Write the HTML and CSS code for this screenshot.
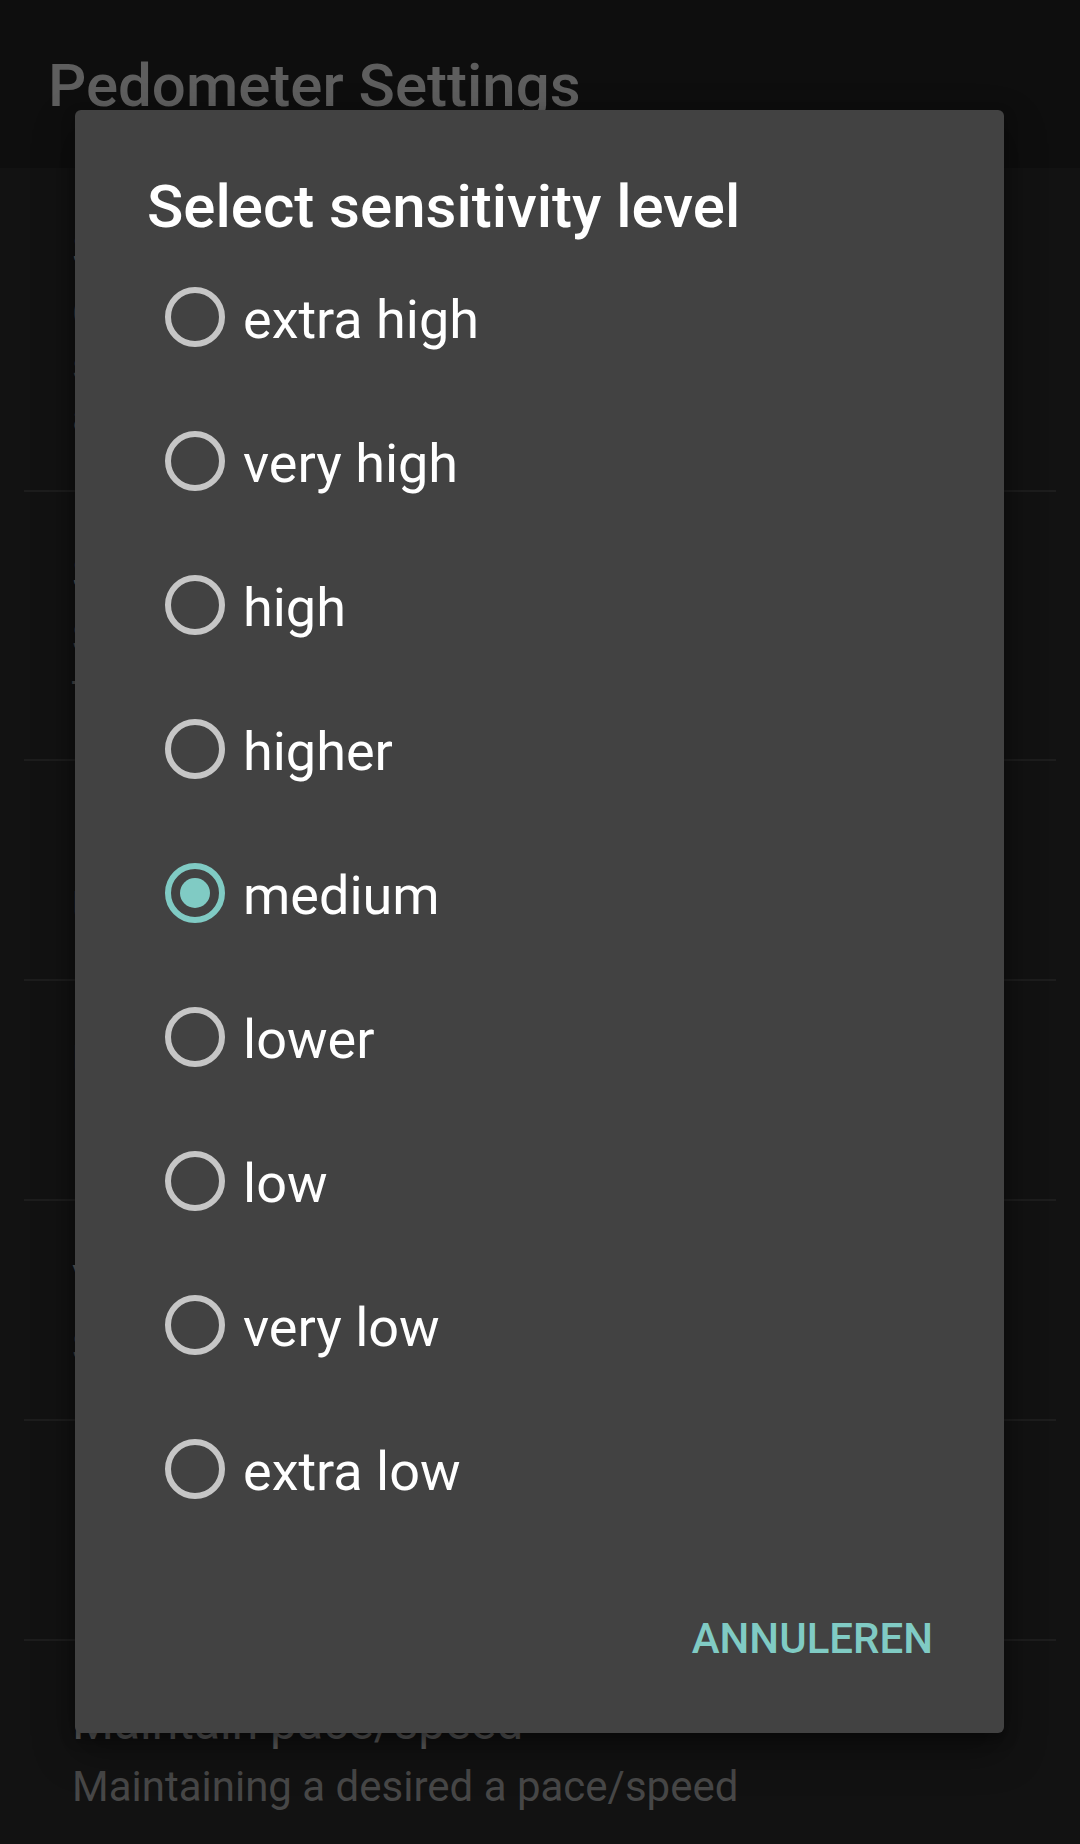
FILE: index.html
```html
<!DOCTYPE html>
<html>
<head>
<meta charset="utf-8">
<link rel="stylesheet" href="styles.css">
</head>
<body>
<div class="screen">
  <header class="toolbar">Pedometer Settings</header>
  <div class="prefs">
    <div class="pref pref-3">
      <div class="pref-title">Sensitivity</div>
      <div class="pref-summary">Change the sensitivity of the step detection if steps are not counted correctly or too many steps are counted</div>
    </div>
    <div class="pref pref-2">
      <div class="pref-title">Step size</div>
      <div class="pref-summary">Set the length of a single step, used to calculate the distance</div>
    </div>
    <div class="pref">
      <div class="pref-title">Body weight</div>
      <div class="pref-summary">Used to calculate burned calories</div>
    </div>
    <div class="pref">
      <div class="pref-title">Units</div>
      <div class="pref-summary">Metric or imperial units</div>
    </div>
    <div class="pref">
      <div class="pref-title">Voice notification</div>
      <div class="pref-summary">Speak the current status periodically</div>
    </div>
    <div class="pref">
      <div class="pref-title">Daily goal</div>
      <div class="pref-summary">Number of steps you want to reach each day</div>
    </div>
    <div class="pref pref-last">
      <div class="pref-title">Maintain pace/speed</div>
      <div class="pref-summary">Maintaining a desired a pace/speed</div>
    </div>
  </div>

  <div class="dialog">
    <div class="dialog-title">Select sensitivity level</div>
    <div class="choices">
      <div class="choice"><span class="radio"></span><span class="label">extra high</span></div>
      <div class="choice"><span class="radio"></span><span class="label">very high</span></div>
      <div class="choice"><span class="radio"></span><span class="label">high</span></div>
      <div class="choice"><span class="radio"></span><span class="label">higher</span></div>
      <div class="choice"><span class="radio checked"></span><span class="label">medium</span></div>
      <div class="choice"><span class="radio"></span><span class="label">lower</span></div>
      <div class="choice"><span class="radio"></span><span class="label">low</span></div>
      <div class="choice"><span class="radio"></span><span class="label">very low</span></div>
      <div class="choice"><span class="radio"></span><span class="label">extra low</span></div>
    </div>
    <div class="dialog-actions">
      <span class="btn">ANNULEREN</span>
    </div>
  </div>
</div>
</body>
</html>
```

FILE: styles.css
```css
* { box-sizing: border-box; }
html, body {
  margin: 0;
  padding: 0;
  background: #121212;
  font-family: Roboto, "Noto Sans", sans-serif;
}
.screen {
  position: relative;
  width: 1080px;
  height: 1844px;
  overflow: hidden;
  background: #121212;
}
.toolbar {
  height: 168px;
  background: #0e0e0e;
  color: #5e5e5e;
  font-size: 60px;
  font-weight: 500;
  line-height: 172px;
  padding-left: 48px;
}
.prefs {
  display: flex;
  flex-direction: column;
}
.pref {
  margin: 0 24px;
  padding: 54px 48px 46px;
  border-bottom: 2px solid #1d1d1d;
  height: 220px;
}
.pref-2 { height: 269px; }
.pref-3 { height: 324px; }
.pref-last { border-bottom: none; }
.pref-title {
  color: #5e5e5e;
  font-size: 48px;
  line-height: 56px;
  white-space: nowrap;
}
.pref-summary {
  margin-top: 10px;
  color: #474747;
  font-size: 42px;
  line-height: 52px;
}
.dialog {
  position: absolute;
  left: 75px;
  top: 110px;
  width: 929px;
  height: 1623px;
  background: #424242;
  border-radius: 6px;
  box-shadow: 0 18px 40px rgba(0,0,0,0.35), 0 6px 14px rgba(0,0,0,0.3);
  display: flex;
  flex-direction: column;
}
.dialog-title {
  padding: 62px 72px 0;
  color: #ffffff;
  font-size: 60px;
  font-weight: 500;
  line-height: 70px;
}
.choices {
  margin-top: 3px;
  display: flex;
  flex-direction: column;
}
.choice {
  height: 144px;
  display: flex;
  align-items: center;
  padding-left: 90px;
}
.radio {
  width: 60px;
  height: 60px;
  border: 6px solid #c6c6c6;
  border-radius: 50%;
  flex: none;
  display: flex;
  align-items: center;
  justify-content: center;
}
.radio.checked {
  border-color: #80cbc4;
}
.radio.checked::after {
  content: "";
  width: 30px;
  height: 30px;
  border-radius: 50%;
  background: #80cbc4;
}
.label {
  margin-left: 18px;
  color: #ffffff;
  font-size: 54px;
  line-height: 138px;
  padding-top: 6px;
}
.dialog-actions {
  display: flex;
  justify-content: flex-end;
  padding: 74px 71px 0 0;
}
.btn {
  color: #80cbc4;
  font-size: 42px;
  font-weight: 500;
  line-height: 48px;
}
```
